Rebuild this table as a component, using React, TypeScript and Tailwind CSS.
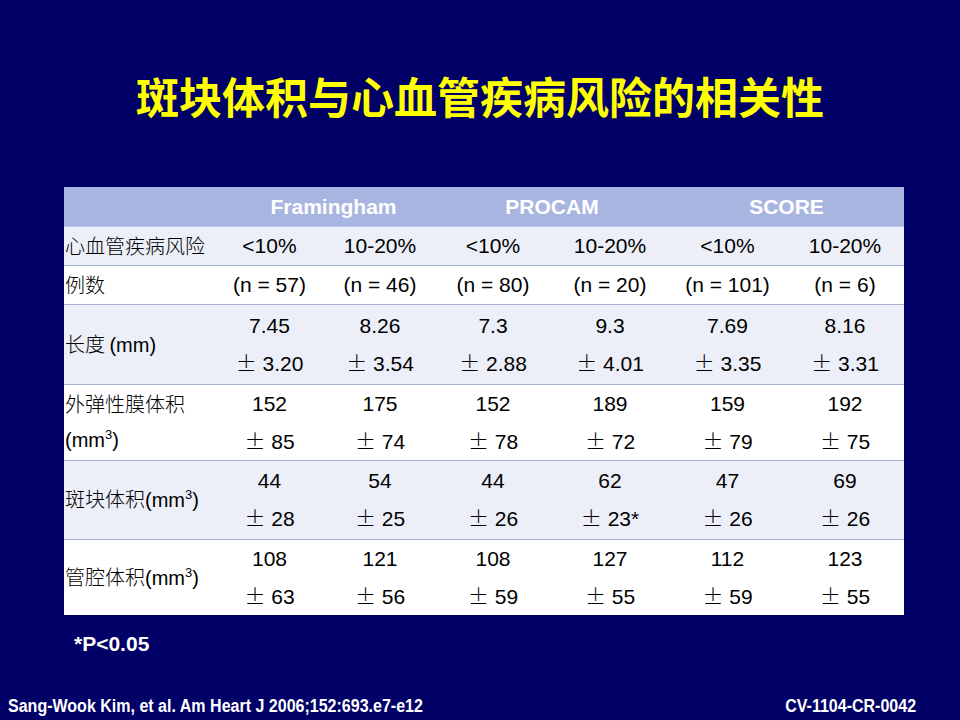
import React from "react";

type Cell = string | [string, string];

type Row = {
  label: React.ReactNode;
  cells: Cell[];
  shade: boolean;
  h: string;
};

const sup3 = <sup className="text-[13px] -top-[8px]">3</sup>;

const ROWS: Row[] = [
  { label: "心血管疾病风险", cells: ["<10%", "10-20%", "<10%", "10-20%", "<10%", "10-20%"], shade: true, h: "h-[39px]" },
  { label: "例数", cells: ["(n = 57)", "(n = 46)", "(n = 80)", "(n = 20)", "(n = 101)", "(n = 6)"], shade: false, h: "h-[39px]" },
  {
    label: <span>长度 <span className="font-['Liberation_Sans',Arial,sans-serif]">(mm)</span></span>,
    cells: [["7.45", "3.20"], ["8.26", "3.54"], ["7.3", "2.88"], ["9.3", "4.01"], ["7.69", "3.35"], ["8.16", "3.31"]],
    shade: true,
    h: "h-[80px]",
  },
  {
    label: (
      <div className="flex flex-col leading-[37px]">
        <span>外弹性膜体积</span>
        <span className="font-['Liberation_Sans',Arial,sans-serif]">(mm{sup3})</span>
      </div>
    ),
    cells: [["152", "85"], ["175", "74"], ["152", "78"], ["189", "72"], ["159", "79"], ["192", "75"]],
    shade: false,
    h: "h-[74px]",
  },
  {
    label: <span>斑块体积<span className="font-['Liberation_Sans',Arial,sans-serif]">(mm{sup3})</span></span>,
    cells: [["44", "28"], ["54", "25"], ["44", "26"], ["62", "23*"], ["47", "26"], ["69", "26"]],
    shade: true,
    h: "h-[79px]",
  },
  {
    label: <span>管腔体积<span className="font-['Liberation_Sans',Arial,sans-serif]">(mm{sup3})</span></span>,
    cells: [["108", "63"], ["121", "56"], ["108", "59"], ["127", "55"], ["112", "59"], ["123", "55"]],
    shade: false,
    h: "h-[74px]",
  },
];

function PlusMinus({ v }: { v: string }) {
  return (
    <span>
      <span className="font-['Noto_Sans_CJK_SC',sans-serif] font-light">±</span> {v}
    </span>
  );
}

function DataCell({ cell }: { cell: Cell }) {
  if (typeof cell === "string") return <span>{cell}</span>;
  return (
    <div className="flex flex-col items-center leading-[37px]">
      <span>{cell[0]}</span>
      <PlusMinus v={cell[1]} />
    </div>
  );
}

export default function App() {
  return (
    <div className="w-[960px] h-[720px] bg-[#000066] flex flex-col overflow-hidden font-['Liberation_Sans',Arial,sans-serif]">
      <h1 className="pt-[70px] text-center text-[43px] leading-[50px] font-bold text-[#ffff00] font-['Noto_Sans_CJK_SC',sans-serif]">
        斑块体积与心血管疾病风险的相关性
      </h1>

      <table className="mt-[67px] ml-[64px] w-[840px] table-fixed border-collapse text-[21px] text-black">
        <colgroup>
          <col className="w-[150px]" />
          <col className="w-[111px]" />
          <col className="w-[110px]" />
          <col className="w-[116px]" />
          <col className="w-[118px]" />
          <col className="w-[117px]" />
          <col className="w-[118px]" />
        </colgroup>
        <thead>
          <tr className="h-[39px] bg-[#a9b5e1] text-white font-bold border-b border-[#b9c3e6]">
            <th className="p-0" />
            <th colSpan={2} className="p-0 pl-[18px] font-bold">Framingham</th>
            <th colSpan={2} className="p-0 font-bold">PROCAM</th>
            <th colSpan={2} className="p-0 font-bold">SCORE</th>
          </tr>
        </thead>
        <tbody>
          {ROWS.map((row, i) => (
            <tr
              key={i}
              className={`${row.h} ${row.shade ? "bg-[#eceff8]" : "bg-white"} ${i < ROWS.length - 1 ? "border-b border-[#a7b2d6]" : ""}`}
            >
              <td className="p-0 pl-[1px] text-left font-['Noto_Sans_CJK_SC',sans-serif] font-light text-[20px] leading-[28px] whitespace-nowrap">
                {row.label}
              </td>
              {row.cells.map((c, j) => (
                <td key={j} className="p-0 text-center whitespace-nowrap leading-[28px]">
                  <DataCell cell={c} />
                </td>
              ))}
            </tr>
          ))}
        </tbody>
      </table>

      <div className="mt-[19px] ml-[74px] text-[21px] leading-[20px] font-bold text-white">*P&lt;0.05</div>

      <div className="flex-1" />

      <div className="flex justify-between items-end px-[8px] pb-[5px] text-white font-bold text-[18px] leading-[18px]">
        <span className="inline-block origin-left scale-x-[0.89] whitespace-nowrap">
          Sang-Wook Kim, et al. Am Heart J 2006;152:693.e7-e12
        </span>
        <span className="inline-block origin-right scale-x-[0.89] mr-[36px] whitespace-nowrap">CV-1104-CR-0042</span>
      </div>
    </div>
  );
}
